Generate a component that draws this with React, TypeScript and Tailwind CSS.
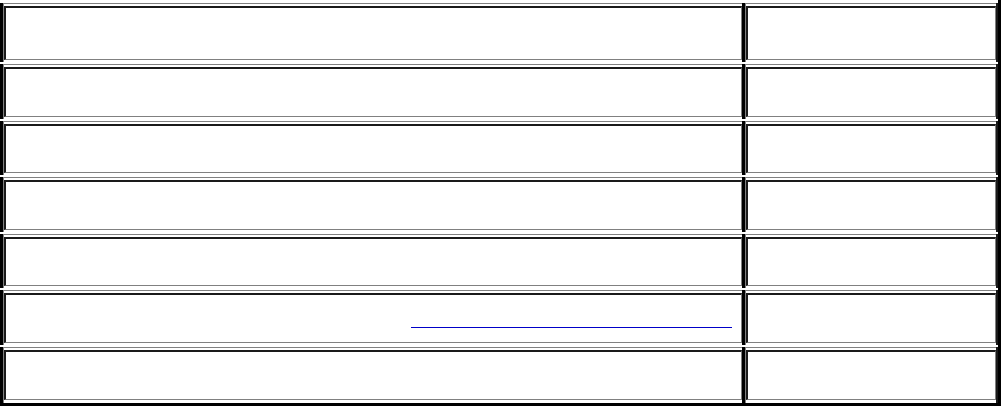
import React from "react";

type CellProps = { right?: boolean; children?: React.ReactNode; last?: boolean };

function Cell({ right, children, last }: CellProps) {
  return (
    <div
      className={
        right
          ? "flex h-full w-[256px] border-l-[3px] border-r-[2px] border-l-black border-r-[#1a1a1a]"
          : "flex h-full w-[742px] border-l-[3px] border-l-black"
      }
    >
      <div
        className={
          last
            ? "flex flex-1 flex-col border-t-[1px] border-l-[1px] border-t-[#808080] border-l-[#808080] pt-[2px] pb-[3px]"
            : "flex flex-1 flex-col border-t-[1px] border-l-[1px] border-t-[#808080] border-l-[#808080] pt-[2px] pb-[2px]"
        }
      >
        <div className="flex flex-1 items-center border-t-2 border-l-2 border-b-[1px] border-r-[1px] border-t-[#1a1a1a] border-l-[#1a1a1a] border-b-[#808080] border-r-[#808080]">
          {children}
        </div>
      </div>
    </div>
  );
}

function Row({ h, last, children }: { h: string; last?: boolean; children?: React.ReactNode }) {
  return (
    <div className={`flex ${h} ${last ? "" : "mb-[2px]"}`}>
      <Cell last={last}>{children}</Cell>
      <Cell right last={last} />
    </div>
  );
}

export default function App() {
  return (
    <div className="w-[1003px] h-[406px] bg-white overflow-hidden" style={{ fontFamily: '"Liberation Serif", serif' }}>
      <div className="w-[1001px] border-r-[3px] border-b-[3px] border-black pt-[3px]">
        <Row h="h-[59px]" />
        <Row h="h-[55px]" />
        <Row h="h-[54px]" />
        <Row h="h-[55px]" />
        <Row h="h-[54px]" />
        <Row h="h-[55px]">
          <div className="flex w-full justify-end pr-[9px] pt-[18px]">
            <a className="inline-block w-[321px] h-[1px] bg-[#0000c8]" aria-label="link"></a>
          </div>
        </Row>
        <Row h="h-[56px]" last />
      </div>
    </div>
  );
}
